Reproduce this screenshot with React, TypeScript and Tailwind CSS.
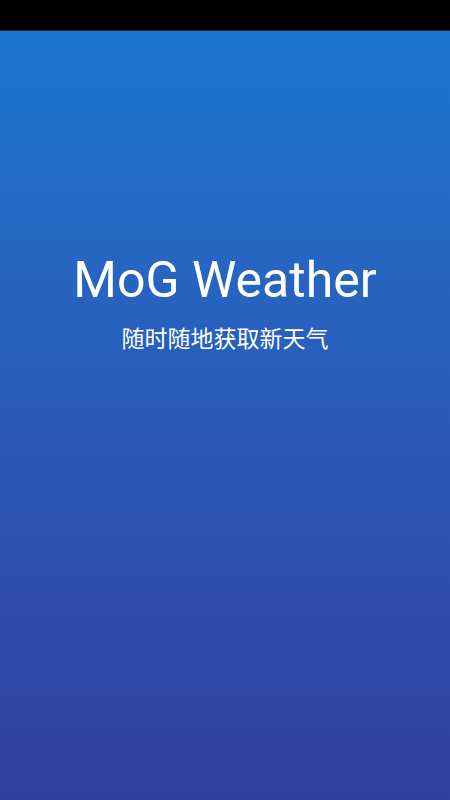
import React from 'react';

const App: React.FC = () => {
  return (
    <div className="w-[450px] h-[800px] flex flex-col bg-black overflow-hidden">
      {/* status bar */}
      <div className="h-[31px] shrink-0 bg-black border-b border-[#2a2a2a]"></div>

      <main className="flex-1 flex flex-col items-center bg-gradient-to-b from-[#1a76d1] to-[#303f9f] pt-[221px]">
        <h1 className="text-white text-[50px] leading-[56px] font-normal font-['Roboto',sans-serif]">
          MoG Weather
        </h1>
        <p className="mt-[13px] text-white text-[23px] leading-[32px] font-['Noto_Sans_CJK_SC',sans-serif]">
          随时随地获取新天气
        </p>
      </main>
    </div>
  );
};

export default App;
